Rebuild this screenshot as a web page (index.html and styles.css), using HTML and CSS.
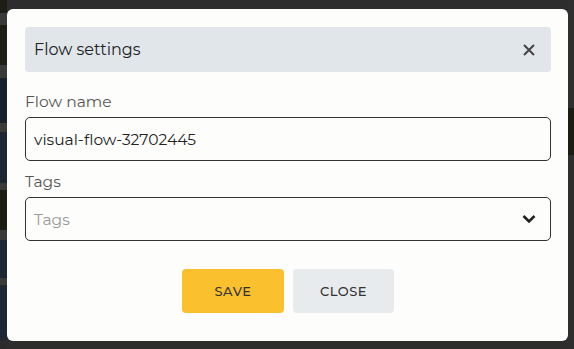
FILE: index.html
```html
<!DOCTYPE html>
<html lang="en">
<head>
  <meta charset="UTF-8">
  <meta name="viewport" content="width=device-width, initial-scale=1.0">
  <title>Flow settings</title>
  <link rel="stylesheet" href="styles.css">
</head>
<body>
  <div class="backdrop">
    <div class="dialog">
      <div class="dialog-header">
        <span class="dialog-title">Flow settings</span>
        <button class="close-icon" aria-label="Close">
          <svg width="12" height="12" viewBox="0 0 12 12">
            <path d="M1 1 L11 11 M11 1 L1 11" stroke="#444" stroke-width="2" fill="none"/>
          </svg>
        </button>
      </div>

      <label class="field-label" for="flowName">Flow name</label>
      <input class="field-input" id="flowName" type="text" value="visual-flow-32702445">

      <label class="field-label" for="tags">Tags</label>
      <div class="field-select" id="tags">
        <span class="placeholder">Tags</span>
        <svg width="14" height="10" viewBox="0 0 14 10">
          <path d="M1.5 2 L7 7.5 L12.5 2" stroke="#222" stroke-width="2.6" fill="none"/>
        </svg>
      </div>

      <div class="dialog-actions">
        <button class="btn btn-save">SAVE</button>
        <button class="btn btn-close">CLOSE</button>
      </div>
    </div>
  </div>
</body>
</html>
```

FILE: styles.css
```css
* {
  margin: 0;
  padding: 0;
  box-sizing: border-box;
}

body {
  width: 574px;
  height: 349px;
  overflow: hidden;
  font-family: "Montserrat", "Noto Sans", sans-serif;
  background:
    linear-gradient(to bottom,
      #1e1e14 0, #1e1e14 13px,
      #3a3a38 13px, #3a3a38 25px,
      #1e1e14 25px, #1e1e14 65px,
      #3a3a38 65px, #3a3a38 78px,
      #17212e 78px, #17212e 123px,
      #3a3a38 123px, #3a3a38 132px,
      #1d2733 132px, #1d2733 183px,
      #3a3a38 183px, #3a3a38 190px,
      #1c1c12 190px, #1c1c12 230px,
      #3a3a38 230px, #3a3a38 240px,
      #1d2733 240px, #1d2733 278px,
      #3a3a38 278px, #3a3a38 285px,
      #1d2733 285px, #1d2733 340px,
      #2b2b2b 340px) left top / 7px 100% no-repeat,
    linear-gradient(to bottom,
      #2f2f2f 0, #2f2f2f 108px,
      #1c1c12 108px, #1c1c12 155px,
      #2e2e2e 155px) right top / 6px 100% no-repeat,
    #2d2d2d;
}

.backdrop {
  padding: 9px 6px 8px 7px;
}

.dialog {
  background: #fdfdfb;
  border-radius: 6px;
  height: 332px;
  padding: 18px 17px 0 18px;
  display: flex;
  flex-direction: column;
}

.dialog-header {
  height: 45px;
  background: #e0e6ea;
  border-radius: 4px;
  display: flex;
  align-items: center;
  justify-content: space-between;
  padding: 0 16px 0 9px;
}

.dialog-title {
  font-size: 16px;
  color: #222;
}

.close-icon {
  border: none;
  background: none;
  display: flex;
  cursor: pointer;
}

.field-label {
  font-size: 15.5px;
  color: #555;
  margin-top: 20px;
  margin-bottom: 6px;
  line-height: 19px;
}

.field-input,
.field-select {
  height: 44px;
  border: 1px solid #333;
  border-radius: 5px;
  font-family: inherit;
  font-size: 15.5px;
  color: #222;
  padding: 0 8px;
  background: #fdfdfb;
  outline: none;
}

.field-select {
  display: flex;
  align-items: center;
  justify-content: space-between;
  padding-right: 14px;
}

.field-select .placeholder {
  color: #999;
}

.field-input + .field-label {
  margin-top: 11px;
}

.dialog-actions {
  display: flex;
  justify-content: center;
  gap: 9px;
  margin-top: 28px;
}

.btn {
  width: 102px;
  height: 44px;
  border: none;
  border-radius: 4px;
  font-family: inherit;
  font-size: 13px;
  font-weight: 500;
  letter-spacing: 0.5px;
  color: #333;
  cursor: pointer;
}

.btn-save {
  background: #fbc02d;
}

.btn-close {
  background: #e8ebee;
  width: 101px;
}
```
